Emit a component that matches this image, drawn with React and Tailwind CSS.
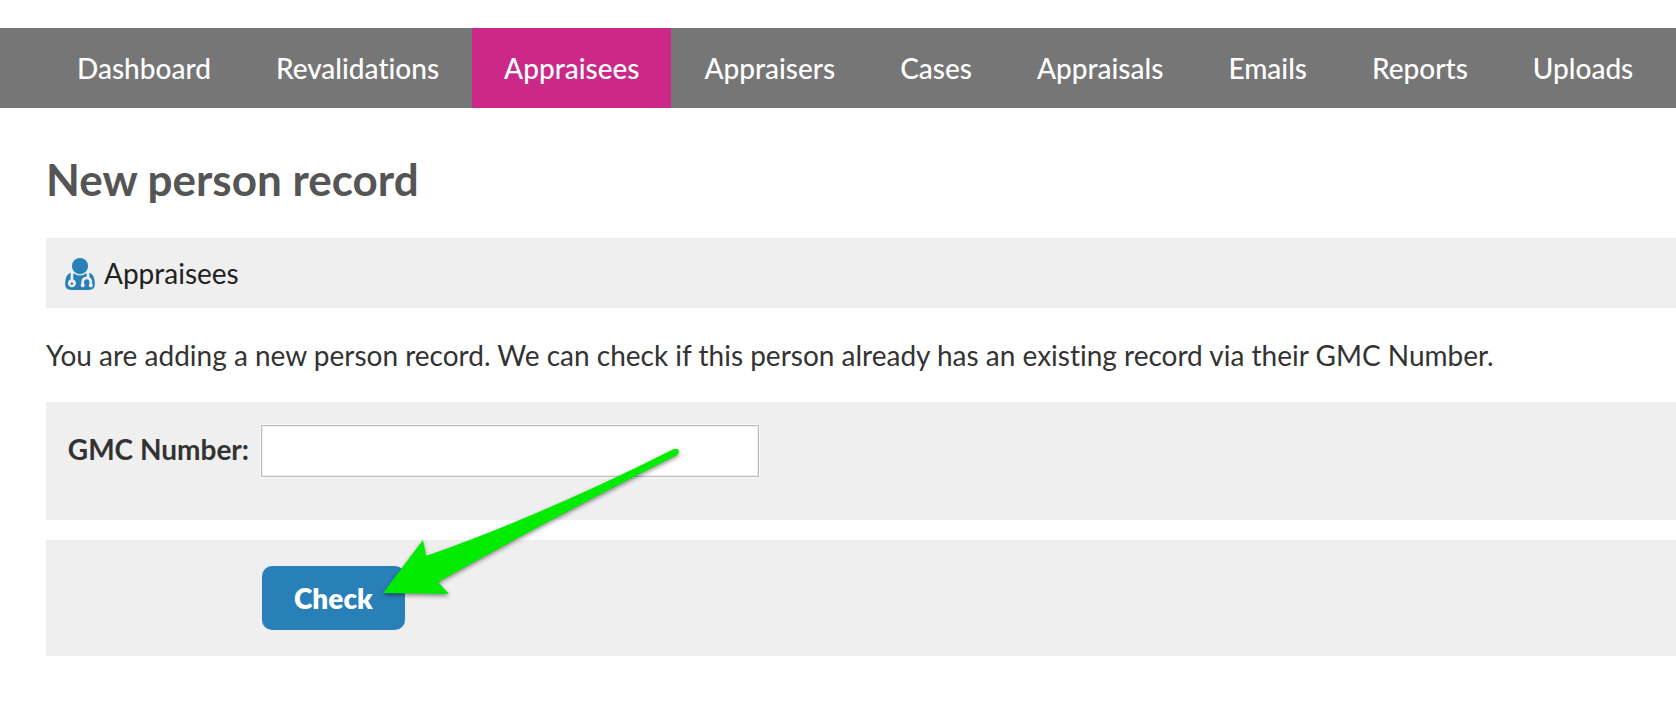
const navItems = [
  "Dashboard",
  "Revalidations",
  "Appraisees",
  "Appraisers",
  "Cases",
  "Appraisals",
  "Emails",
  "Reports",
  "Uploads",
];

function DoctorIcon({ className }) {
  return (
    <svg viewBox="0 128 1408 1518" fill="currentColor" className={className} aria-hidden="true">
      <path d="M384 1344q0 26-19 45t-45 19t-45-19t-19-45t19-45t45-19t45 19t19 45zM1408 1387q0 121-73 190t-194 69h-874q-121 0-194-69t-73-190q0-68 5.500-131t24-138t47.500-132.500t81-103t120-60.500q-22 52-22 120v203q-58 20-93 70t-35 111q0 80 56 136t136 56t136-56t56-136q0-61-35.500-111t-92.500-70v-203q0-62 25-93q132 104 295 104t295-104q25 31 25 93v64q-106 0-181 75t-75 181v89q-32 29-32 71q0 40 28 68t68 28t68-28t28-68q0-42-32-71v-89q0-52 38-90t90-38t90 38t38 90v89q-32 29-32 71q0 40 28 68t68 28t68-28t28-68q0-42-32-71v-89q0-68-34.500-127.500t-93.500-93.500q0-10 .500-42.500t0-48t-2.500-41.500t-7-47t-13-40q68 15 120 60.500t81 103t47.500 132.500t24 138t5.500 131zM1088 512q0 159-112.500 271.500t-271.500 112.500t-271.500-112.500t-112.500-271.500t112.500-271.500t271.500-112.500t271.500 112.500t112.500 271.500z" />
    </svg>
  );
}

function Arrow({ className }) {
  return (
    <svg viewBox="0 0 300 152" className={className} aria-hidden="true">
      <path
        d="M0 145L40 92L43 108Q160 67 291 1Q295 0 296 3Q296 5 294 7Q165 72 55 134L66 146Z"
        fill="#00eb00"
      />
    </svg>
  );
}

export default function App() {
  return (
    <div className="overflow-x-hidden bg-white pt-7 font-['Lato',sans-serif] text-[28px] leading-10 text-[#333333] [font-variant-ligatures:no-common-ligatures]">
      <nav className="flex gap-px bg-[#767676] pl-[45px] font-medium text-white">
        {navItems.map((item) => (
          <a
            key={item}
            href="#"
            aria-current={item === "Appraisees" ? "page" : undefined}
            className="px-8 py-5 aria-[current=page]:bg-[#cb2888]"
          >
            {item}
          </a>
        ))}
      </nav>

      <main className="pl-[46px]">
        <h1 className="pt-[46px] text-[44px] leading-[50px] font-bold text-[#555555]">New person record</h1>

        <div className="mt-[34px] flex items-center gap-[9px] bg-[#efefef] py-[15px] pl-[19px] text-[#222222]">
          <DoctorIcon className="mt-0.5 h-8 w-[30px] text-[#2980b9]" />
          <span>Appraisees</span>
        </div>

        <p className="py-[27px]">
          You are adding a new person record. We can check if this person already has an existing record via their GMC Number.
        </p>

        <form onSubmit={(e) => e.preventDefault()}>
          <div className="flex bg-[#efefef] pt-[23px] pb-[43px]">
            <label htmlFor="gmc" className="w-[215px] pt-1 pr-3 text-right font-bold">
              GMC Number:
            </label>
            <input
              id="gmc"
              type="text"
              className="h-[52px] w-[498px] border border-[#bbbbbb] bg-white px-3 shadow-[0_0_0_1px_#fafafa,inset_0_0_0_1px_#eeeeee] outline-none"
            />
          </div>

          <div className="mt-5 bg-[#efefef] py-[26px] pl-[216px]">
            <div className="relative w-fit">
              <button type="submit" className="block rounded-[10px] bg-[#2980b9] px-8 py-3 font-extrabold text-white">
                Check
              </button>
              <Arrow className="pointer-events-none absolute bottom-[30px] left-[121px] w-[300px] max-w-none drop-shadow-[0_2px_2px_rgba(0,0,0,0.45)]" />
            </div>
          </div>
        </form>
      </main>
    </div>
  );
}
